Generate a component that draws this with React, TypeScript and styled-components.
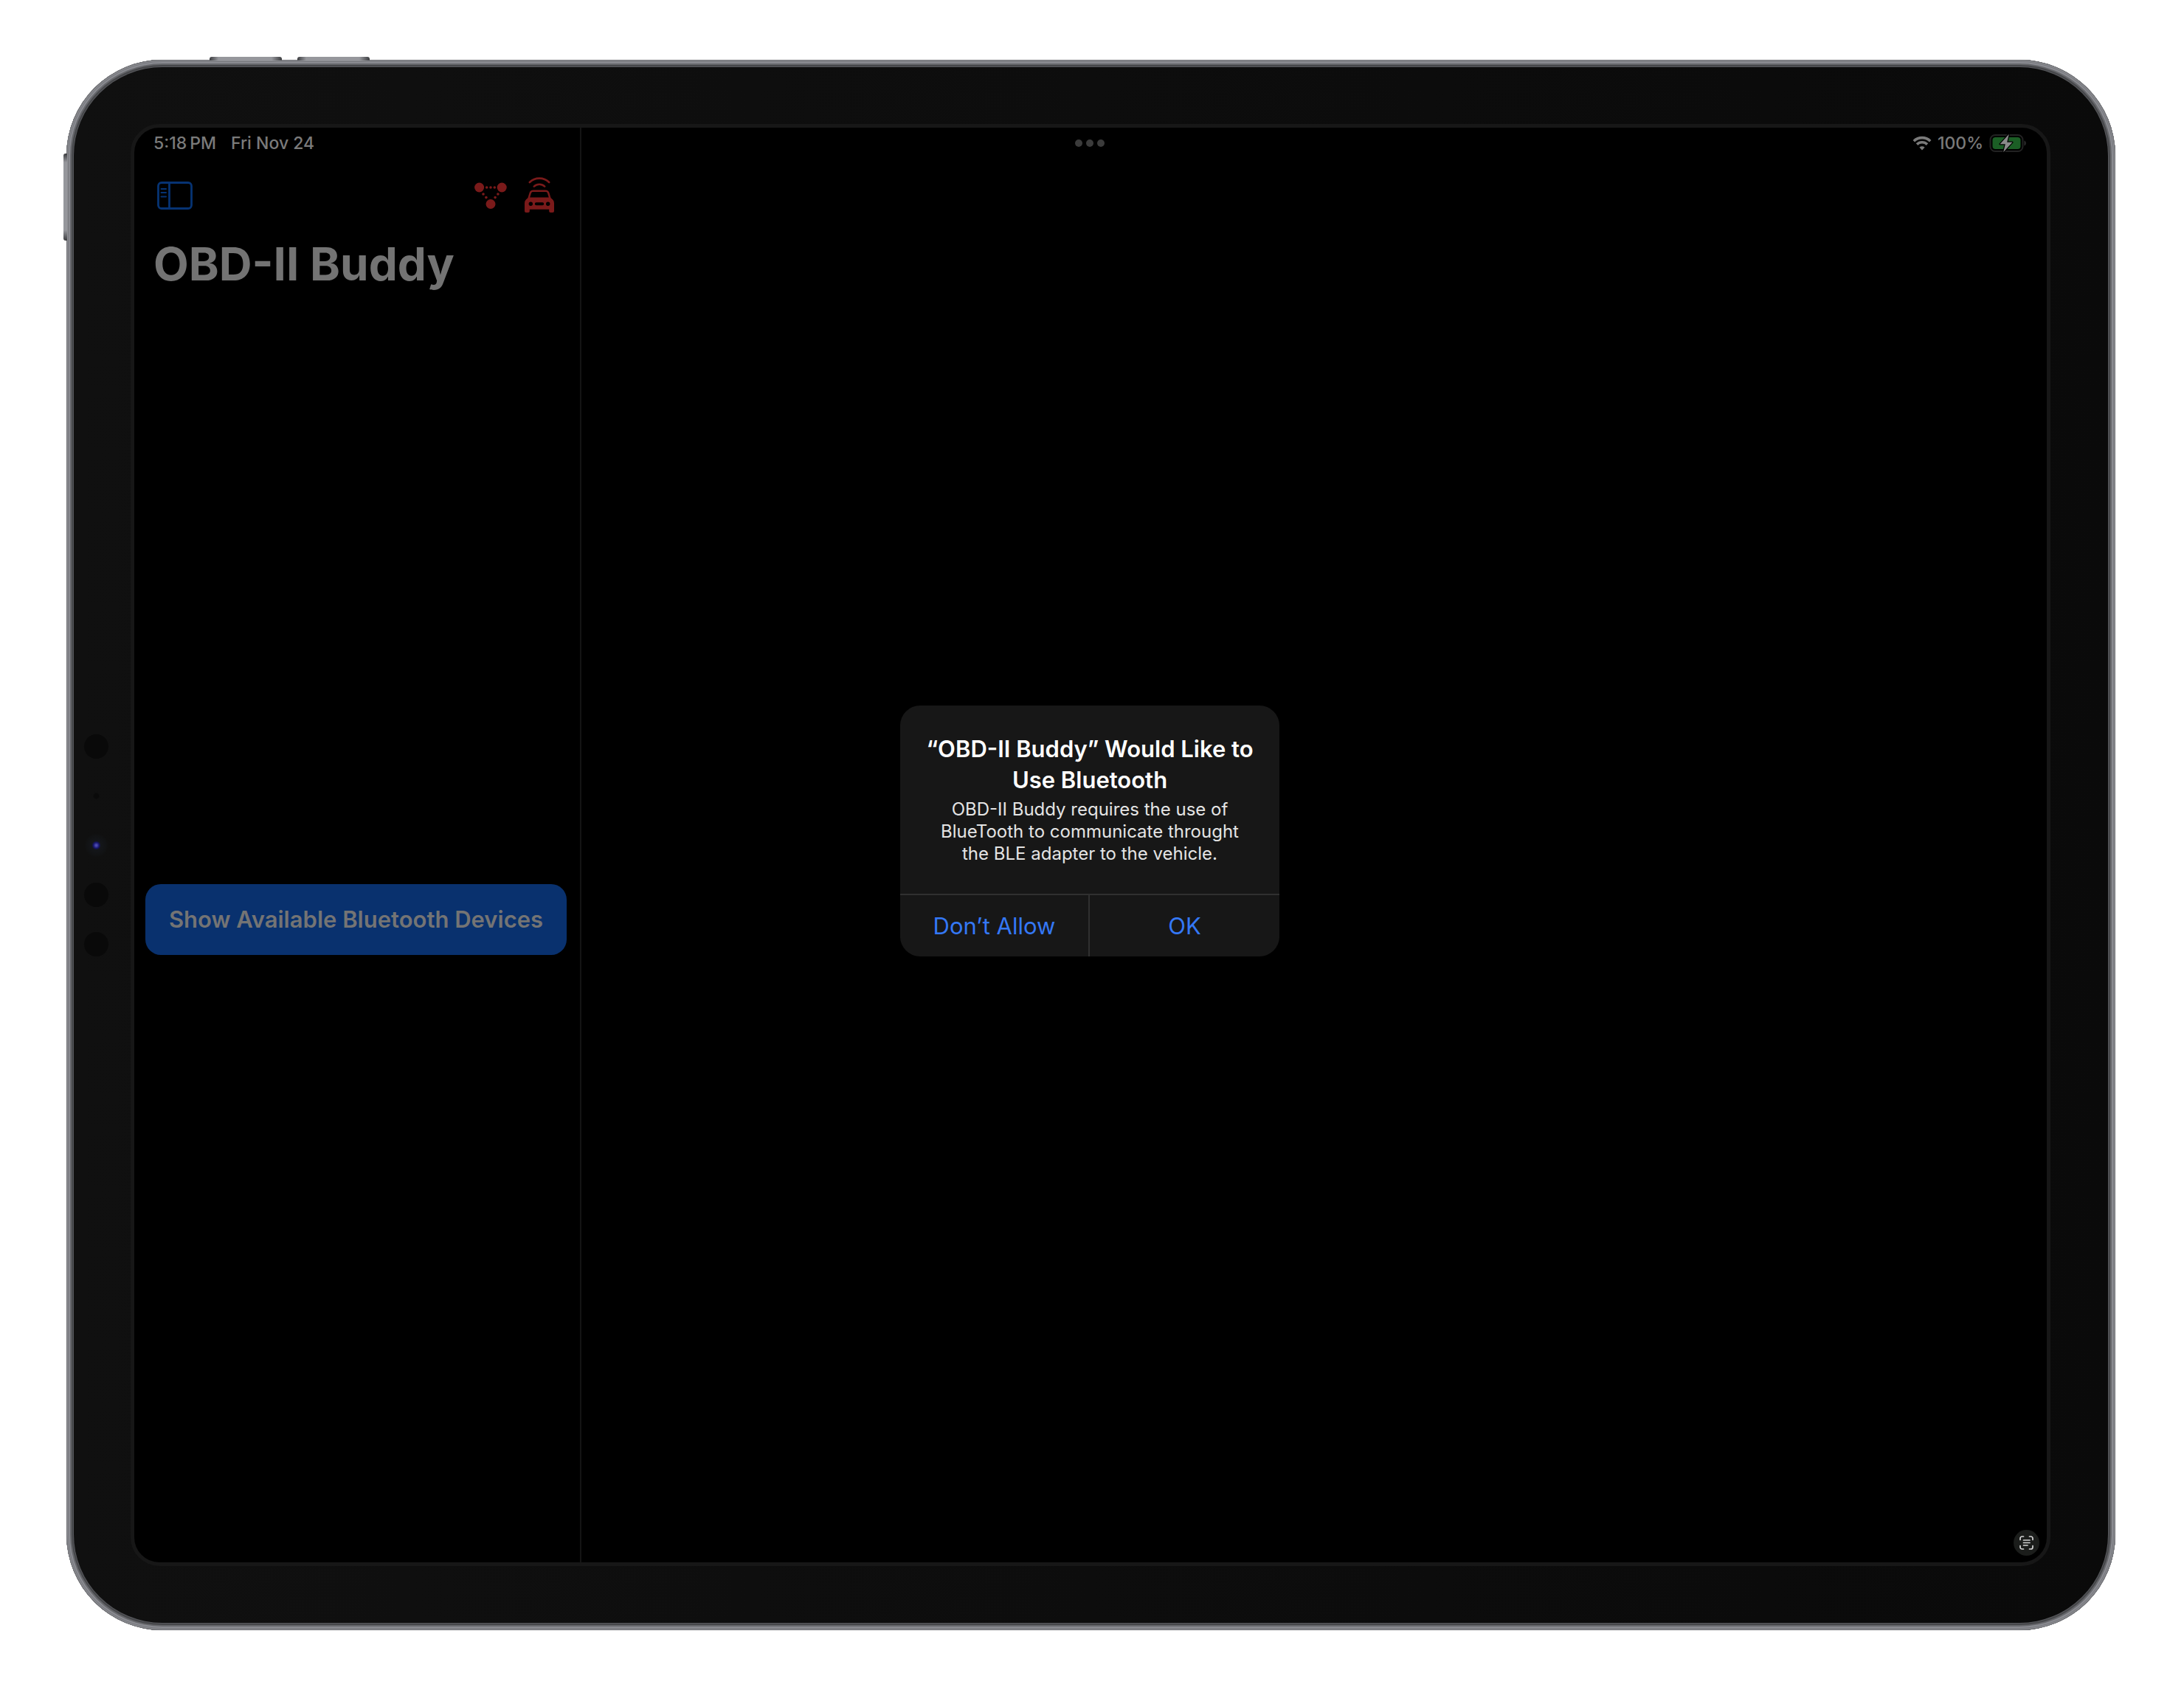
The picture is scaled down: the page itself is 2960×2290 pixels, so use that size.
import React from "react";
import styled, { createGlobalStyle } from "styled-components";

const GlobalStyle = createGlobalStyle`
  *, *::before, *::after { box-sizing: border-box; }
  body { margin: 0; background: #ffffff; }
  button { font: inherit; border: 0; padding: 0; background: none; cursor: pointer; }
  svg { display: block; }
`;

const Page = styled.main`
  min-height: 100vh;
  display: flex;
  padding: 81px 93px 81px 90px;
  font-family: Inter, "Liberation Sans", sans-serif;
`;

const Device = styled.div`
  position: relative;
  flex: 1;
  display: flex;
  padding: 10px;
  border-radius: 130px;
  background: #56575b;
  box-shadow:
    inset 0 0 0 1px #6f7074,
    inset 0 0 0 2px #8f9095,
    inset 0 0 0 3px #77787d,
    inset 0 0 0 5px #8a8b91,
    inset 0 0 0 7px #66676b,
    inset 0 0 0 9px #46474a;
`;

const TopKey = styled.span<{ $left: number }>`
  position: absolute;
  top: -4px;
  left: ${(p) => p.$left}px;
  width: 98px;
  height: 5px;
  border-radius: 3px 3px 0 0;
  background: linear-gradient(90deg, #3c3d40, #96979c 12px, #96979c 84px, #3c3d40);
`;

const SideKey = styled.span`
  position: absolute;
  top: 127px;
  left: -4px;
  width: 5px;
  height: 118px;
  border-radius: 3px 0 0 3px;
  background: linear-gradient(180deg, #3c3d40, #96979c 12px, #96979c 104px, #3c3d40);
`;

const Bezel = styled.div`
  flex: 1;
  display: grid;
  grid-template-columns: 33px 1fr;
  gap: 30px;
  padding: 77px 78px 77px 14px;
  border-radius: 120px;
  background: linear-gradient(90deg, #101010, #0a0a0a);
`;

const Sensors = styled.div`
  display: flex;
  flex-direction: column;
  justify-content: center;
  gap: 34px;
`;

const Sensor = styled.span<{ $kind: "dark" | "mic" | "camera" }>`
  height: 33px;
  border-radius: 50%;
  background: ${(p) =>
    p.$kind === "dark"
      ? "#090909"
      : p.$kind === "mic"
        ? "radial-gradient(circle, #0a0a0a 3px, transparent 5px)"
        : "radial-gradient(circle, #4b4ab0 1px, #16146a 4px, #14161a 6px, #111213 14px, #101010 16px)"};
`;

const Screen = styled.div`
  display: grid;
  grid-template: minmax(0, 1fr) / minmax(0, 1fr);
  border: 5px solid #171717;
  border-radius: 39px;
  background: #000000;
  overflow: hidden;
  & > * { grid-area: 1 / 1; }
`;

const StatusBar = styled.header`
  align-self: start;
  display: grid;
  grid-template-columns: 1fr auto 1fr;
  align-items: center;
  height: 42px;
  padding: 0 28px 0 26px;
  font-size: 23px;
  font-weight: 500;
  line-height: 28px;
  color: #7a7a7a;
`;

const StatusGroup = styled.div<{ $end?: boolean; $gap: number }>`
  display: flex;
  align-items: center;
  justify-content: ${(p) => (p.$end ? "flex-end" : "flex-start")};
  gap: ${(p) => p.$gap}px;
`;

const Multitask = styled.button`
  display: flex;
  gap: 5px;
`;

const Dot = styled.span`
  width: 10px;
  height: 10px;
  border-radius: 50%;
  background: #3b3b3b;
`;

const Split = styled.div`
  display: grid;
  grid-template-columns: 606px 1fr;
`;

const Sidebar = styled.aside`
  display: flex;
  flex-direction: column;
  padding: 46px 0 38px;
  border-right: 2px solid #141414;
`;

const NavBar = styled.nav`
  display: flex;
  align-items: center;
  justify-content: space-between;
  height: 92px;
  padding: 0 35px 0 31px;
`;

const NavActions = styled.div`
  display: flex;
  align-items: center;
  gap: 24px;
`;

const Title = styled.h1`
  margin: 0;
  padding: 8px 26px 16px;
  font-size: 62px;
  font-weight: 700;
  line-height: 78px;
  color: #737373;
`;

const SidebarBody = styled.div`
  flex: 1;
  display: flex;
  flex-direction: column;
  justify-content: center;
  padding: 0 18px 0 15px;
`;

const PrimaryButton = styled.button`
  && {
    height: 96px;
    border-radius: 21px;
    background: #09316e;
    color: #747474;
    font-size: 31px;
    font-weight: 600;
    line-height: 40px;
    white-space: nowrap;
  }
`;

const AlertLayer = styled.div`
  display: flex;
  align-items: center;
  justify-content: center;
  padding: 0 2px 38px 0;
`;

const Alert = styled.section`
  width: 514px;
  border-radius: 27px;
  background: #171717;
  overflow: hidden;
  text-align: center;
`;

const AlertText = styled.div`
  padding: 38px 28px 39px;
`;

const AlertTitle = styled.h2`
  margin: 0 0 4px;
  font-size: 31px;
  font-weight: 600;
  line-height: 42px;
  color: #ffffff;
`;

const AlertMessage = styled.p`
  margin: 0;
  padding: 0 16px;
  font-size: 24px;
  font-weight: 400;
  line-height: 30px;
  color: #e4e4e4;
`;

const AlertActions = styled.div`
  display: grid;
  grid-template-columns: 1fr 1fr;
  border-top: 2px solid #303030;
`;

const AlertButton = styled.button`
  && {
    height: 83px;
    font-size: 31px;
    line-height: 40px;
    color: #3478f6;
  }
  &&:first-child { border-right: 2px solid #303030; }
`;

const ScanButton = styled.button`
  && {
    align-self: end;
    justify-self: end;
    display: grid;
    place-items: center;
    width: 35px;
    height: 35px;
    margin: 0 10px 9px 0;
    border-radius: 50%;
    background: #1b1d1b;
  }
`;

const WifiIcon = () => (
  <svg width="26" height="20" viewBox="0 0 26 20" fill="none" stroke="#7a7a7a" aria-hidden="true">
    <path d="M1.8 7.2a16 16 0 0 1 22.4 0" strokeWidth="3.6" />
    <path d="M6 11.6a10 10 0 0 1 14 0" strokeWidth="3.6" />
    <path d="M13 19.6l-3.6-3.8a5.2 5.2 0 0 1 7.2 0z" fill="#7a7a7a" stroke="none" />
  </svg>
);

const BatteryIcon = () => (
  <svg width="50" height="26" viewBox="0 0 50 26" aria-hidden="true">
    <rect x="1.5" y="2" width="44" height="22" rx="6.5" fill="#000000" stroke="#222222" strokeWidth="2" />
    <rect x="4.5" y="5" width="38" height="16" rx="4" fill="#1b5e25" />
    <path d="M47.5 9.500c3 1 3 6 0 7z" fill="#2e2e2e" />
    <path
      d="M26.800 .8L14.600 14.200h7.200L19.200 25.200 31.400 11.800h-7.200z"
      fill="#8a8a8a"
      stroke="#000000"
      strokeWidth="2.400"
      strokeLinejoin="round"
      paintOrder="stroke"
    />
  </svg>
);

const SidebarIcon = () => (
  <svg width="48" height="38" viewBox="0 0 48 38" fill="none" stroke="#063373" aria-hidden="true">
    <rect x="1.5" y="1.5" width="45" height="35" rx="4.5" strokeWidth="2.8" />
    <path d="M16.5 1.5v35" strokeWidth="2.8" />
    <path d="M5.5 10h6.5M5.5 15h6.5M5.5 20.5h6.5" strokeWidth="2" strokeLinecap="round" />
  </svg>
);

const PeersIcon = () => (
  <svg width="44" height="37" viewBox="0 0 44 37" fill="#7a1a1a" aria-hidden="true">
    <circle cx="6.6" cy="7" r="6.5" />
    <circle cx="37.2" cy="7" r="6.5" />
    <circle cx="22" cy="29.5" r="6.5" />
    <circle cx="16.7" cy="7" r="1.8" />
    <circle cx="22" cy="7" r="1.8" />
    <circle cx="27.3" cy="7" r="1.8" />
    <circle cx="12" cy="16" r="1.8" />
    <circle cx="15.9" cy="20.6" r="1.8" />
    <circle cx="31.9" cy="16" r="1.8" />
    <circle cx="28.1" cy="20.6" r="1.8" />
  </svg>
);

const CarIcon = () => (
  <svg width="40" height="50" viewBox="0 0 40 50" fill="none" aria-hidden="true">
    <path d="M6.8 7a19 19 0 0 1 26.400 0" stroke="#7a1a1a" strokeWidth="2.6" strokeLinecap="round" />
    <path d="M12.8 12.600a10.500 10.500 0 0 1 14.400 0" stroke="#7a1a1a" strokeWidth="2.6" strokeLinecap="round" />
    <g transform="translate(0 -1)">
      <path
        fillRule="evenodd"
        fill="#7a1a1a"
        d="M11.500 18.500h17c2.600 0 4.100 1.200 4.900 3.600l2.200 7.200c2.600 1.800 4.400 3.600 4.400 7.200v10.300c0 1.600-.7 2.200-2 2.200h-2.800c-1.400 0-2-.8-2-2.200v-2H6.800v2c0 1.400-.6 2.200-2 2.200H2c-1.300 0-2-.6-2-2.200V36.500c0-3.600 1.800-5.400 4.400-7.200l2.200-7.200c.8-2.400 2.300-3.600 4.900-3.600zM11.800 20.900c-1.600 0-2.400.6-2.900 2l-1.700 5.700h25.600l-1.700-5.700c-.5-1.400-1.300-2-2.900-2zM8.300 34.600a2.700 2.700 0 1 0 0 5.400 2.700 2.700 0 0 0 0-5.400zM31.700 34.600a2.700 2.700 0 1 0 0 5.400 2.700 2.700 0 0 0 0-5.400zM15.800 35.200a2 2 0 0 0 0 4h8.400a2 2 0 0 0 0-4z"
      />
    </g>
  </svg>
);

const ScanIcon = () => (
  <svg width="19" height="19" viewBox="0 0 19 19" fill="none" stroke="#d4d4d4" strokeWidth="1.7" strokeLinecap="round" aria-hidden="true">
    <path d="M1 5.5V3.5A2.5 2.5 0 0 1 3.5 1h2M13.5 1h2A2.5 2.5 0 0 1 18 3.5v2M18 13.5v2a2.5 2.5 0 0 1-2.5 2.5h-2M5.5 18h-2A2.5 2.5 0 0 1 1 15.5v-2" />
    <path d="M5.5 6h8.5M5.5 9.5h8.5M5.5 13h5.5" />
  </svg>
);

export default function App() {
  return (
    <>
      <GlobalStyle />
      <Page>
        <Device>
          <TopKey $left={194} />
          <TopKey $left={313} />
          <SideKey />
          <Bezel>
            <Sensors>
              <Sensor $kind="dark" />
              <Sensor $kind="mic" />
              <Sensor $kind="camera" />
              <Sensor $kind="dark" />
              <Sensor $kind="dark" />
            </Sensors>
            <Screen>
              <Split>
                <Sidebar>
                  <NavBar>
                    <button type="button" aria-label="Toggle sidebar">
                      <SidebarIcon />
                    </button>
                    <NavActions>
                      <button type="button" aria-label="Adapter connection">
                        <PeersIcon />
                      </button>
                      <button type="button" aria-label="Vehicle connection">
                        <CarIcon />
                      </button>
                    </NavActions>
                  </NavBar>
                  <Title>OBD-II Buddy</Title>
                  <SidebarBody>
                    <PrimaryButton type="button">Show Available Bluetooth Devices</PrimaryButton>
                  </SidebarBody>
                </Sidebar>
              </Split>
              <StatusBar>
                <StatusGroup $gap={20}>
                  <span>5:18{"\u2009"}PM</span>
                  <span>Fri Nov 24</span>
                </StatusGroup>
                <Multitask type="button" aria-label="Multitasking">
                  <Dot />
                  <Dot />
                  <Dot />
                </Multitask>
                <StatusGroup $gap={8} $end>
                  <WifiIcon />
                  <span>100%</span>
                  <BatteryIcon />
                </StatusGroup>
              </StatusBar>
              <AlertLayer>
                <Alert role="alertdialog" aria-labelledby="alert-title" aria-describedby="alert-message">
                  <AlertText>
                    <AlertTitle id="alert-title">“OBD-II Buddy” Would Like to Use Bluetooth</AlertTitle>
                    <AlertMessage id="alert-message">
                      OBD-II Buddy requires the use of BlueTooth to communicate throught the BLE adapter to the vehicle.
                    </AlertMessage>
                  </AlertText>
                  <AlertActions>
                    <AlertButton type="button">Don’t Allow</AlertButton>
                    <AlertButton type="button">OK</AlertButton>
                  </AlertActions>
                </Alert>
              </AlertLayer>
              <ScanButton type="button" aria-label="Live Text">
                <ScanIcon />
              </ScanButton>
            </Screen>
          </Bezel>
        </Device>
      </Page>
    </>
  );
}
